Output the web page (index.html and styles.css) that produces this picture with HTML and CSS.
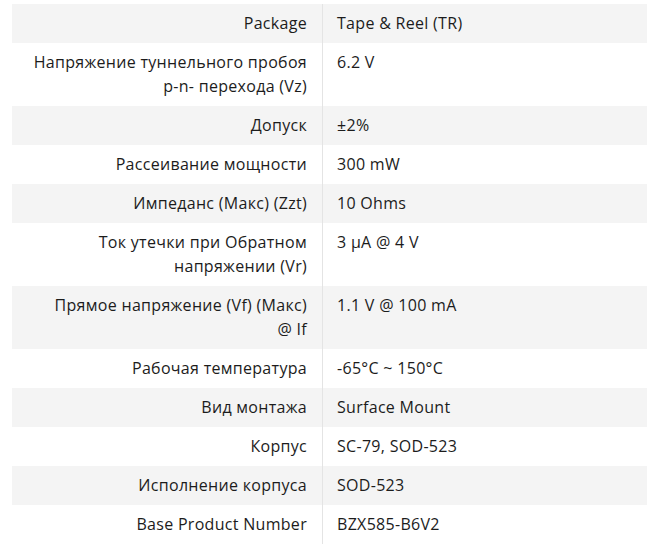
FILE: index.html
```html
<!DOCTYPE html>
<html lang="ru">
<head>
<meta charset="utf-8">
<link rel="stylesheet" href="styles.css">
</head>
<body>
<table class="specs">
<tbody>
<tr><th>Package</th><td>Tape &amp; Reel (TR)</td></tr>
<tr><th>Напряжение туннельного пробоя <span class="nw">p-n-</span> перехода (Vz)</th><td>6.2 V</td></tr>
<tr><th>Допуск</th><td>±2%</td></tr>
<tr><th>Рассеивание мощности</th><td>300 mW</td></tr>
<tr><th>Импеданс (Макс) (Zzt)</th><td>10 Ohms</td></tr>
<tr><th>Ток утечки при Обратном напряжении (Vr)</th><td>3 µA @ 4 V</td></tr>
<tr><th>Прямое напряжение (Vf) (Макс) <span class="nw">@ If</span></th><td>1.1 V @ 100 mA</td></tr>
<tr><th>Рабочая температура</th><td>-65°C ~ 150°C</td></tr>
<tr><th>Вид монтажа</th><td>Surface Mount</td></tr>
<tr><th>Корпус</th><td>SC-79, SOD-523</td></tr>
<tr><th>Исполнение корпуса</th><td>SOD-523</td></tr>
<tr><th>Base Product Number</th><td>BZX585-B6V2</td></tr>
</tbody>
</table>
</body>
</html>
```

FILE: styles.css
```css
html, body {
  margin: 0;
  padding: 0;
  background: #ffffff;
}
body {
  padding: 4px 0 0 12px;
  font-family: "Open Sans", "Noto Sans", sans-serif;
  font-size: 16px;
  letter-spacing: 0.3px;
  color: #1c1c1c;
}
.specs {
  border-collapse: collapse;
  width: 635px;
}
.specs tr:nth-child(odd) {
  background: #f4f4f4;
}
.specs th {
  width: 280px;
  text-align: right;
  font-weight: normal;
  vertical-align: top;
  padding: 7px 15px 8px 15px;
  line-height: 24px;
  border-right: 1px solid #e4e4e4;
}
.specs td {
  vertical-align: top;
  padding: 7px 15px 8px 14px;
  line-height: 24px;
}
.nw {
  white-space: nowrap;
}
```
